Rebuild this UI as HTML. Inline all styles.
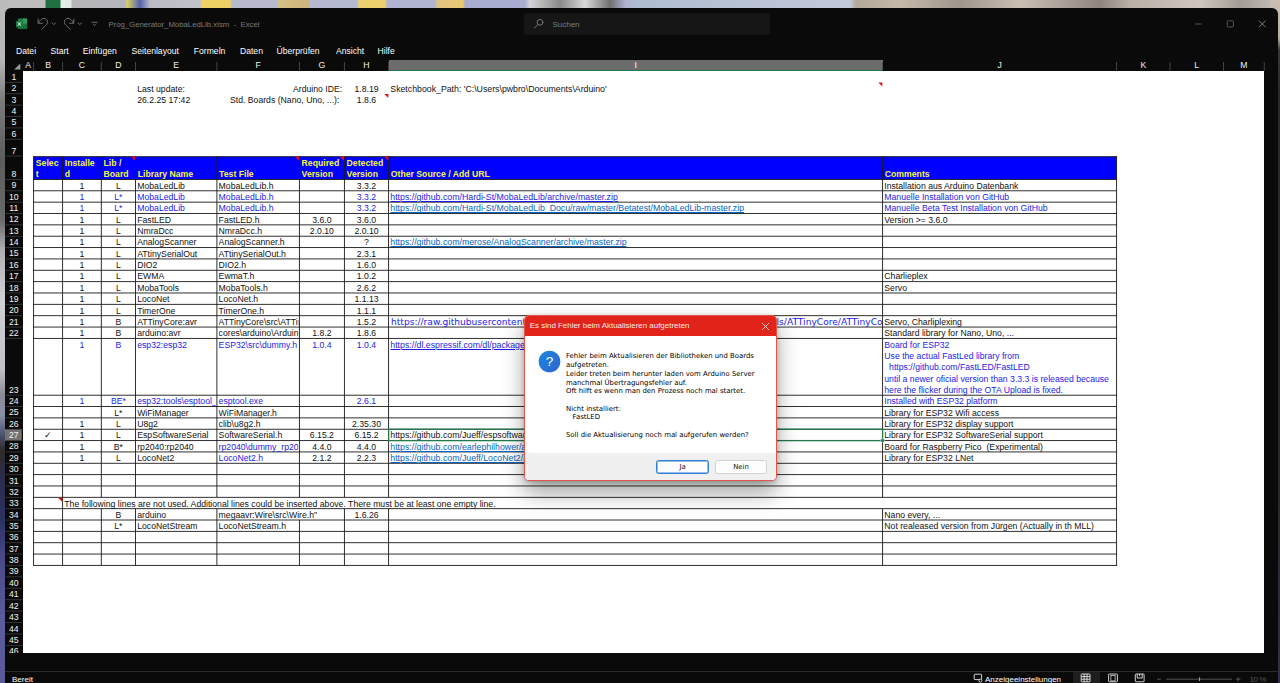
<!DOCTYPE html>
<html lang="de"><head><meta charset="utf-8"><title>Prog_Generator_MobaLedLib.xlsm - Excel</title>
<style>
*{box-sizing:border-box;margin:0;padding:0}
html,body{width:1280px;height:683px;overflow:hidden;background:#26262e}
body{position:relative;font-family:"Liberation Sans",sans-serif;font-size:8.72px;-webkit-font-smoothing:antialiased}
.abs{position:absolute}
#desk-top{position:absolute;left:0;top:0;width:1280px;height:9px;background:linear-gradient(90deg,#bcbcbc 0,#bdbdbd 45px,#1f6f43 46px,#1f6f43 60px,#e8efe9 61px,#dfe9e2 71px,#b6b6ba 72px,#b4b4ba 125px,#d8d060 127px,#5560b0 140px,#bcbcc4 150px,#c2c2cc 200px,#efd064 202px,#efd064 230px,#b9b9cc 232px,#b9b9cc 277px,#d6c084 279px,#cdb67c 308px,#b6b8cf 310px,#b4b8d0 357px,#ecd070 359px,#ecd070 385px,#b0b4d0 387px,#b0b4d0 435px,#dfc285 437px,#e8c870 463px,#a9add0 465px,#a9add0 525px,#d4d4d4 530px,#8a8a8a 560px,#d8d8d8 585px,#707070 610px,#b0b4d0 626px,#b0bcd2 640px,#c2cad9 850px,#b3a999 856px,#c4b9aa 900px,#9f968c 960px,#c9c0b4 1020px,#8e867f 1100px,#b9b0a6 1130px,#cfc7be 1200px,#a39c96 1240px,#c9c2bb 1280px)}
#desk-left{position:absolute;left:0;top:0;width:7px;height:683px;background:linear-gradient(180deg,#bcbcbc 0,#b6b6b6 60px,#7c7c7c 100px,#5c5c5c 160px,#6a6a6a 220px,#b0b0b4 250px,#d0d0d4 300px,#c0c0c8 370px,#8a8a94 395px,#8890a8 415px,#4a5070 435px,#322a2a 450px,#2a2c48 475px,#2c3264 520px,#4a4a88 560px,#5c5c9c 620px,#5a5a98 683px)}
#desk-right{position:absolute;left:1270px;top:0;width:10px;height:683px;background:linear-gradient(180deg,#c9c0b6 0,#b8ada1 38px,#3a3836 50px,#2a2a2c 90px,#29292c 500px,#2d2b3c 600px,#34304a 683px)}
#win{position:absolute;left:5.2px;top:8px;width:1272.8px;height:690px;background:#0a0a0a;border-radius:6px 6px 0 0;overflow:hidden}
#sheet{position:absolute;left:22.5px;top:70.9px;width:1241.7px;height:581.7px;background:#fff}
.t{position:absolute;white-space:nowrap;line-height:11.36px;font-size:8.69px}
.rh{position:absolute;left:5.4px;width:16.9px;color:#f2f2f2;font-size:8.66px;text-align:center;overflow:hidden}
.rh span{position:absolute;left:0;width:16.9px;line-height:11.36px;height:11.36px;display:block}
.ch{position:absolute;top:60.4px;height:10.5px;line-height:11.5px;color:#f2f2f2;text-align:center;font-size:8.66px;overflow:hidden}
.ui{position:absolute;white-space:nowrap;color:#fff}
#dlg{position:absolute;left:523.6px;top:315px;width:253.4px;height:166.4px;border-radius:5px;background:#fff;border:1px solid #e3564a;box-shadow:0 12px 22px 0 rgba(0,0,0,.36),0 1px 4px rgba(0,0,0,.22);overflow:hidden}
#dlg .tb{position:absolute;left:0;top:0;right:0;height:20px;background:#e2231a}
#dlg .tt{position:absolute;left:5.2px;top:0;line-height:20.6px;font-size:7.95px;color:rgba(255,255,255,.93);white-space:nowrap}
#dlg .foot{position:absolute;left:0;right:0;top:137px;bottom:0;background:#f0f0f0}
#dlg .msg{position:absolute;left:41.4px;top:36.4px;font-family:"DejaVu Sans","Liberation Sans",sans-serif;font-size:6.91px;line-height:8.72px;color:#000;white-space:nowrap}
.btn{position:absolute;top:144px;height:14px;border-radius:2.5px;background:#fdfdfd;border:1px solid #d2d2d2;font-family:"DejaVu Sans","Liberation Sans",sans-serif;font-size:6.91px;line-height:12.2px;text-align:center;color:#111}
</style></head><body>
<div id="desk-top"></div><div id="desk-left"></div>
<div id="desk-right"></div>
<div id="win"></div>

<!-- title bar -->
<svg class="abs" style="left:0;top:0" width="1280" height="72" viewBox="0 0 1280 72">
 <!-- excel icon -->
 <rect x="18.1" y="18.5" width="9" height="10.5" rx="0.8" fill="#1c8447"/>
 <rect x="18.1" y="24.4" width="9" height="4.6" fill="#18733e"/>
 <rect x="23" y="18.5" width="4.1" height="5" fill="#2f9c5b"/>
 <rect x="15.9" y="21" width="6.9" height="6.4" rx="0.6" fill="#17783f"/>
 <path d="M17.9 22.3l3 3.4M20.9 22.3l-3 3.4" stroke="#fff" stroke-width="1" fill="none"/>
 <!-- undo / redo -->
 <g fill="none" stroke="#6c6c6c" stroke-width="1" stroke-linecap="round" stroke-linejoin="round">
  <path d="M38.1 19v4.3h4.3"/><path d="M38.5 22.9C40 20 42 18.3 44 18.3c2.4 0 3.6 2.2 3.5 4.3-.2 2-2.4 3.4-5.9 6.6"/>
  <path d="M52 22.9l1.8 1.7 1.8-1.7"/>
  <path d="M73.8 19v4.3h-4.3"/><path d="M73.4 22.9C71.9 20 69.9 18.3 67.9 18.3c-2.4 0-3.6 2.2-3.5 4.3.2 2 2.4 3.4 5.9 6.6"/>
  <path d="M78 22.9l1.8 1.7 1.8-1.7"/>
  <path d="M92.2 22.3h4.8"/><path d="M93.2 24.3l1.4 1.3 1.4-1.3"/>
 </g>
 <!-- search box -->
 <rect x="524" y="13.2" width="246" height="21.6" rx="2.5" fill="#161616"/>
 <g fill="none" stroke="#7d7d7d" stroke-width="0.9" stroke-linecap="round"><circle cx="540" cy="22.3" r="2.9"/><path d="M537.9 24.5l-3.6 3.7"/></g>
 <!-- window controls -->
 <g fill="none" stroke="#5c5c5c" stroke-width="0.9"><path d="M1195.2 24h6.5"/><rect x="1227.2" y="20.8" width="6.2" height="6.2" rx="1"/><path d="M1259 20.6l6.6 6.6M1265.6 20.6l-6.6 6.6" stroke="#8a8a8a"/></g>
 <!-- select-all triangle -->
 <path d="M20.4 63.4v6.2h-6.2z" fill="#9a9a9a"/>
</svg>
<div class="ui" style="left:108.4px;top:19.3px;font-size:7.78px;line-height:11px;color:#7a7a7a">Prog_Generator_MobaLedLib.xlsm &nbsp;- &nbsp;Excel</div>
<div class="ui" style="left:552.4px;top:19.2px;font-size:8px;line-height:11px;color:#7c7c7c">Suchen</div>
<!-- ribbon tabs -->
<div class="ui" style="left:16px;top:45.7px;line-height:11px;font-size:8.6px">Datei</div>
<div class="ui" style="left:50.6px;top:45.7px;line-height:11px;font-size:8.6px">Start</div>
<div class="ui" style="left:82.8px;top:45.7px;line-height:11px;font-size:8.6px">Einfügen</div>
<div class="ui" style="left:131.6px;top:45.7px;line-height:11px;font-size:8.6px">Seitenlayout</div>
<div class="ui" style="left:193.8px;top:45.7px;line-height:11px;font-size:8.6px">Formeln</div>
<div class="ui" style="left:240px;top:45.7px;line-height:11px;font-size:8.6px">Daten</div>
<div class="ui" style="left:276.6px;top:45.7px;line-height:11px;font-size:8.6px">Überprüfen</div>
<div class="ui" style="left:336px;top:45.7px;line-height:11px;font-size:8.6px">Ansicht</div>
<div class="ui" style="left:377.6px;top:45.7px;line-height:11px;font-size:8.6px">Hilfe</div>

<div id="sheet"></div>
<div class="ch" style="left:22.50px;width:11.10px;">A</div>
<div class="ch" style="left:33.60px;width:29.00px;">B</div>
<div class="ch" style="left:62.60px;width:38.70px;">C</div>
<div class="ch" style="left:101.30px;width:34.20px;">D</div>
<div class="ch" style="left:135.50px;width:81.40px;">E</div>
<div class="ch" style="left:216.90px;width:82.50px;">F</div>
<div class="ch" style="left:299.40px;width:45.00px;">G</div>
<div class="ch" style="left:344.40px;width:44.20px;">H</div>
<div class="ch" style="left:388.60px;width:494.00px;background:#6c6c6c;border-bottom:1.3px solid #217a4d;color:#fff;">I</div>
<div class="ch" style="left:882.60px;width:234.00px;">J</div>
<div class="ch" style="left:1116.60px;width:53.40px;">K</div>
<div class="ch" style="left:1170.00px;width:53.50px;">L</div>
<div class="ch" style="left:1223.50px;width:40.70px;">M</div>
<div class="rh" style="top:70.90px;height:11.40px;"><span style="top:0.94px">1</span></div>
<div class="rh" style="top:82.30px;height:11.40px;"><span style="top:0.94px">2</span></div>
<div class="rh" style="top:93.70px;height:11.40px;"><span style="top:0.94px">3</span></div>
<div class="rh" style="top:105.10px;height:11.40px;"><span style="top:0.94px">4</span></div>
<div class="rh" style="top:116.50px;height:11.40px;"><span style="top:0.94px">5</span></div>
<div class="rh" style="top:127.90px;height:11.40px;"><span style="top:0.94px">6</span></div>
<div class="rh" style="top:139.30px;height:16.70px;"><span style="top:6.24px">7</span></div>
<div class="rh" style="top:156.00px;height:23.44px;"><span style="top:12.98px">8</span></div>
<div class="rh" style="top:179.44px;height:11.35px;"><span style="top:0.89px">9</span></div>
<div class="rh" style="top:190.79px;height:11.35px;"><span style="top:0.89px">10</span></div>
<div class="rh" style="top:202.15px;height:11.35px;"><span style="top:0.89px">11</span></div>
<div class="rh" style="top:213.50px;height:11.35px;"><span style="top:0.89px">12</span></div>
<div class="rh" style="top:224.86px;height:11.35px;"><span style="top:0.89px">13</span></div>
<div class="rh" style="top:236.21px;height:11.35px;"><span style="top:0.89px">14</span></div>
<div class="rh" style="top:247.57px;height:11.35px;"><span style="top:0.89px">15</span></div>
<div class="rh" style="top:258.92px;height:11.35px;"><span style="top:0.89px">16</span></div>
<div class="rh" style="top:270.27px;height:11.35px;"><span style="top:0.89px">17</span></div>
<div class="rh" style="top:281.63px;height:11.35px;"><span style="top:0.89px">18</span></div>
<div class="rh" style="top:292.98px;height:11.35px;"><span style="top:0.89px">19</span></div>
<div class="rh" style="top:304.34px;height:11.35px;"><span style="top:0.89px">20</span></div>
<div class="rh" style="top:315.69px;height:11.35px;"><span style="top:0.89px">21</span></div>
<div class="rh" style="top:327.05px;height:11.35px;"><span style="top:0.89px">22</span></div>
<div class="rh" style="top:338.40px;height:56.80px;"><span style="top:46.34px">23</span></div>
<div class="rh" style="top:395.20px;height:11.35px;"><span style="top:0.89px">24</span></div>
<div class="rh" style="top:406.55px;height:11.35px;"><span style="top:0.89px">25</span></div>
<div class="rh" style="top:417.89px;height:11.35px;"><span style="top:0.89px">26</span></div>
<div class="rh" style="top:429.24px;height:11.35px;background:#727272;border-right:1.2px solid #217a4d;"><span style="top:0.89px">27</span></div>
<div class="rh" style="top:440.59px;height:11.35px;"><span style="top:0.89px">28</span></div>
<div class="rh" style="top:451.93px;height:11.35px;"><span style="top:0.89px">29</span></div>
<div class="rh" style="top:463.28px;height:11.35px;"><span style="top:0.89px">30</span></div>
<div class="rh" style="top:474.63px;height:11.35px;"><span style="top:0.89px">31</span></div>
<div class="rh" style="top:485.97px;height:11.35px;"><span style="top:0.89px">32</span></div>
<div class="rh" style="top:497.32px;height:11.35px;"><span style="top:0.89px">33</span></div>
<div class="rh" style="top:508.67px;height:11.35px;"><span style="top:0.89px">34</span></div>
<div class="rh" style="top:520.01px;height:11.35px;"><span style="top:0.89px">35</span></div>
<div class="rh" style="top:531.36px;height:11.35px;"><span style="top:0.89px">36</span></div>
<div class="rh" style="top:542.71px;height:11.35px;"><span style="top:0.89px">37</span></div>
<div class="rh" style="top:554.05px;height:11.35px;"><span style="top:0.89px">38</span></div>
<div class="rh" style="top:565.40px;height:11.43px;"><span style="top:0.97px">39</span></div>
<div class="rh" style="top:576.83px;height:11.43px;"><span style="top:0.97px">40</span></div>
<div class="rh" style="top:588.26px;height:11.43px;"><span style="top:0.97px">41</span></div>
<div class="rh" style="top:599.69px;height:11.43px;"><span style="top:0.97px">42</span></div>
<div class="rh" style="top:611.11px;height:11.43px;"><span style="top:0.97px">43</span></div>
<div class="rh" style="top:622.54px;height:11.43px;"><span style="top:0.97px">44</span></div>
<div class="rh" style="top:633.97px;height:11.43px;"><span style="top:0.97px">45</span></div>
<div class="rh" style="top:645.40px;height:11.40px;"><span style="top:0.94px">46</span></div>
<div class="rh" style="top:656.80px;height:11.36px;"><span style="top:0.90px">47</span></div>
<svg class="abs" style="left:0;top:0" width="1280" height="683" viewBox="0 0 1280 683">
<rect x="33.6" y="156.60" width="1083.00" height="22.84" fill="#0000ff"/>
<rect x="33.15" y="156.25" width="1083.90" height="0.9" fill="#1a1a1a"/>
<rect x="33.15" y="178.99" width="1083.90" height="0.9" fill="#1a1a1a"/>
<rect x="33.15" y="190.34" width="1083.90" height="0.9" fill="#1a1a1a"/>
<rect x="33.15" y="201.70" width="1083.90" height="0.9" fill="#1a1a1a"/>
<rect x="33.15" y="213.05" width="1083.90" height="0.9" fill="#1a1a1a"/>
<rect x="33.15" y="224.41" width="1083.90" height="0.9" fill="#1a1a1a"/>
<rect x="33.15" y="235.76" width="1083.90" height="0.9" fill="#1a1a1a"/>
<rect x="33.15" y="247.12" width="1083.90" height="0.9" fill="#1a1a1a"/>
<rect x="33.15" y="258.47" width="1083.90" height="0.9" fill="#1a1a1a"/>
<rect x="33.15" y="269.82" width="1083.90" height="0.9" fill="#1a1a1a"/>
<rect x="33.15" y="281.18" width="1083.90" height="0.9" fill="#1a1a1a"/>
<rect x="33.15" y="292.53" width="1083.90" height="0.9" fill="#1a1a1a"/>
<rect x="33.15" y="303.89" width="1083.90" height="0.9" fill="#1a1a1a"/>
<rect x="33.15" y="315.24" width="1083.90" height="0.9" fill="#1a1a1a"/>
<rect x="33.15" y="326.60" width="1083.90" height="0.9" fill="#1a1a1a"/>
<rect x="33.15" y="337.95" width="1083.90" height="0.9" fill="#1a1a1a"/>
<rect x="33.15" y="394.75" width="1083.90" height="0.9" fill="#1a1a1a"/>
<rect x="33.15" y="406.10" width="1083.90" height="0.9" fill="#1a1a1a"/>
<rect x="33.15" y="417.44" width="1083.90" height="0.9" fill="#1a1a1a"/>
<rect x="33.15" y="428.79" width="1083.90" height="0.9" fill="#1a1a1a"/>
<rect x="33.15" y="440.14" width="1083.90" height="0.9" fill="#1a1a1a"/>
<rect x="33.15" y="451.48" width="1083.90" height="0.9" fill="#1a1a1a"/>
<rect x="33.15" y="462.83" width="1083.90" height="0.9" fill="#1a1a1a"/>
<rect x="33.15" y="474.18" width="1083.90" height="0.9" fill="#1a1a1a"/>
<rect x="33.15" y="485.52" width="1083.90" height="0.9" fill="#1a1a1a"/>
<rect x="33.15" y="496.87" width="1083.90" height="0.9" fill="#1a1a1a"/>
<rect x="33.15" y="508.22" width="1083.90" height="0.9" fill="#1a1a1a"/>
<rect x="33.15" y="519.56" width="1083.90" height="0.9" fill="#1a1a1a"/>
<rect x="33.15" y="530.91" width="1083.90" height="0.9" fill="#1a1a1a"/>
<rect x="33.15" y="542.26" width="1083.90" height="0.9" fill="#1a1a1a"/>
<rect x="33.15" y="553.60" width="1083.90" height="0.9" fill="#1a1a1a"/>
<rect x="33.15" y="564.95" width="1083.90" height="0.9" fill="#1a1a1a"/>
<rect x="33.15" y="156.50" width="0.9" height="408.90" fill="#1a1a1a"/>
<rect x="62.15" y="156.50" width="0.9" height="408.90" fill="#1a1a1a"/>
<rect x="100.85" y="156.50" width="0.9" height="340.82" fill="#1a1a1a"/>
<rect x="100.85" y="508.67" width="0.9" height="56.73" fill="#1a1a1a"/>
<rect x="135.05" y="156.50" width="0.9" height="340.82" fill="#1a1a1a"/>
<rect x="135.05" y="508.67" width="0.9" height="56.73" fill="#1a1a1a"/>
<rect x="216.45" y="156.50" width="0.9" height="340.82" fill="#1a1a1a"/>
<rect x="216.45" y="508.67" width="0.9" height="56.73" fill="#1a1a1a"/>
<rect x="298.95" y="156.50" width="0.9" height="340.82" fill="#1a1a1a"/>
<rect x="298.95" y="520.01" width="0.9" height="45.39" fill="#1a1a1a"/>
<rect x="343.95" y="156.50" width="0.9" height="340.82" fill="#1a1a1a"/>
<rect x="343.95" y="508.67" width="0.9" height="56.73" fill="#1a1a1a"/>
<rect x="388.15" y="156.50" width="0.9" height="340.82" fill="#1a1a1a"/>
<rect x="388.15" y="508.67" width="0.9" height="56.73" fill="#1a1a1a"/>
<rect x="882.15" y="156.50" width="0.9" height="340.82" fill="#1a1a1a"/>
<rect x="882.15" y="508.67" width="0.9" height="56.73" fill="#1a1a1a"/>
<rect x="1116.15" y="156.50" width="0.9" height="408.90" fill="#1a1a1a"/>
<path d="M131.00 156.60H135.20V160.80Z" fill="#ee0a14"/>
<path d="M294.90 156.60H299.10V160.80Z" fill="#ee0a14"/>
<path d="M339.90 156.60H344.10V160.80Z" fill="#ee0a14"/>
<path d="M384.10 156.60H388.30V160.80Z" fill="#ee0a14"/>
<path d="M58.10 497.72H62.30V501.92Z" fill="#ee0a14"/>
<path d="M384.30 93.90H388.30V97.90Z" fill="#ee0a14"/>
<path d="M878.30 82.50H882.30V86.50Z" fill="#ee0a14"/>
<rect x="388.60" y="429.24" width="494.00" height="11.35" fill="none" stroke="#217a4d" stroke-width="1.3"/>
<rect x="880.90" y="438.89" width="3.3" height="3.3" fill="#217a4d" stroke="#fff" stroke-width="0.5"/>
<rect x="5.5" y="81.85" width="16.8" height="0.9" fill="#383838"/>
<rect x="5.5" y="93.25" width="16.8" height="0.9" fill="#383838"/>
<rect x="5.5" y="104.65" width="16.8" height="0.9" fill="#383838"/>
<rect x="5.5" y="116.05" width="16.8" height="0.9" fill="#383838"/>
<rect x="5.5" y="127.45" width="16.8" height="0.9" fill="#383838"/>
<rect x="5.5" y="138.85" width="16.8" height="0.9" fill="#383838"/>
<rect x="5.5" y="155.55" width="16.8" height="0.9" fill="#383838"/>
<rect x="5.5" y="178.99" width="16.8" height="0.9" fill="#383838"/>
<rect x="5.5" y="190.34" width="16.8" height="0.9" fill="#383838"/>
<rect x="5.5" y="201.70" width="16.8" height="0.9" fill="#383838"/>
<rect x="5.5" y="213.05" width="16.8" height="0.9" fill="#383838"/>
<rect x="5.5" y="224.41" width="16.8" height="0.9" fill="#383838"/>
<rect x="5.5" y="235.76" width="16.8" height="0.9" fill="#383838"/>
<rect x="5.5" y="247.12" width="16.8" height="0.9" fill="#383838"/>
<rect x="5.5" y="258.47" width="16.8" height="0.9" fill="#383838"/>
<rect x="5.5" y="269.82" width="16.8" height="0.9" fill="#383838"/>
<rect x="5.5" y="281.18" width="16.8" height="0.9" fill="#383838"/>
<rect x="5.5" y="292.53" width="16.8" height="0.9" fill="#383838"/>
<rect x="5.5" y="303.89" width="16.8" height="0.9" fill="#383838"/>
<rect x="5.5" y="315.24" width="16.8" height="0.9" fill="#383838"/>
<rect x="5.5" y="326.60" width="16.8" height="0.9" fill="#383838"/>
<rect x="5.5" y="337.95" width="16.8" height="0.9" fill="#383838"/>
<rect x="5.5" y="394.75" width="16.8" height="0.9" fill="#383838"/>
<rect x="5.5" y="406.10" width="16.8" height="0.9" fill="#383838"/>
<rect x="5.5" y="417.44" width="16.8" height="0.9" fill="#383838"/>
<rect x="5.5" y="428.79" width="16.8" height="0.9" fill="#383838"/>
<rect x="5.5" y="440.14" width="16.8" height="0.9" fill="#383838"/>
<rect x="5.5" y="451.48" width="16.8" height="0.9" fill="#383838"/>
<rect x="5.5" y="462.83" width="16.8" height="0.9" fill="#383838"/>
<rect x="5.5" y="474.18" width="16.8" height="0.9" fill="#383838"/>
<rect x="5.5" y="485.52" width="16.8" height="0.9" fill="#383838"/>
<rect x="5.5" y="496.87" width="16.8" height="0.9" fill="#383838"/>
<rect x="5.5" y="508.22" width="16.8" height="0.9" fill="#383838"/>
<rect x="5.5" y="519.56" width="16.8" height="0.9" fill="#383838"/>
<rect x="5.5" y="530.91" width="16.8" height="0.9" fill="#383838"/>
<rect x="5.5" y="542.26" width="16.8" height="0.9" fill="#383838"/>
<rect x="5.5" y="553.60" width="16.8" height="0.9" fill="#383838"/>
<rect x="5.5" y="564.95" width="16.8" height="0.9" fill="#383838"/>
<rect x="5.5" y="576.38" width="16.8" height="0.9" fill="#383838"/>
<rect x="5.5" y="587.81" width="16.8" height="0.9" fill="#383838"/>
<rect x="5.5" y="599.24" width="16.8" height="0.9" fill="#383838"/>
<rect x="5.5" y="610.66" width="16.8" height="0.9" fill="#383838"/>
<rect x="5.5" y="622.09" width="16.8" height="0.9" fill="#383838"/>
<rect x="5.5" y="633.52" width="16.8" height="0.9" fill="#383838"/>
<rect x="5.5" y="644.95" width="16.8" height="0.9" fill="#383838"/>
<rect x="5.5" y="656.35" width="16.8" height="0.9" fill="#383838"/>
<rect x="5.5" y="667.71" width="16.8" height="0.9" fill="#383838"/>
<rect x="33.15" y="62" width="0.9" height="9" fill="#4a4a4a"/>
<rect x="62.15" y="62" width="0.9" height="9" fill="#4a4a4a"/>
<rect x="100.85" y="62" width="0.9" height="9" fill="#4a4a4a"/>
<rect x="135.05" y="62" width="0.9" height="9" fill="#4a4a4a"/>
<rect x="216.45" y="62" width="0.9" height="9" fill="#4a4a4a"/>
<rect x="298.95" y="62" width="0.9" height="9" fill="#4a4a4a"/>
<rect x="343.95" y="62" width="0.9" height="9" fill="#4a4a4a"/>
<rect x="388.15" y="62" width="0.9" height="9" fill="#4a4a4a"/>
<rect x="882.15" y="62" width="0.9" height="9" fill="#4a4a4a"/>
<rect x="1116.15" y="62" width="0.9" height="9" fill="#4a4a4a"/>
<rect x="1169.55" y="62" width="0.9" height="9" fill="#4a4a4a"/>
<rect x="1223.05" y="62" width="0.9" height="9" fill="#4a4a4a"/>
<rect x="1263.75" y="62" width="0.9" height="9" fill="#4a4a4a"/>
</svg>
<div class="t" style="left:137.20px;top:83.50px;width:78.70px;height:11.36px;text-align:left;color:#111;">Last update:</div>
<div class="t" style="left:137.20px;top:94.90px;width:78.70px;height:11.36px;text-align:left;color:#111;">26.2.25 17:42</div>
<div class="t" style="left:200.00px;top:83.50px;width:142.20px;height:11.36px;text-align:right;color:#111;">Arduino IDE:</div>
<div class="t" style="left:200.00px;top:94.90px;width:139.40px;height:11.36px;text-align:right;color:#111;">Std. Boards (Nano, Uno, ...):</div>
<div class="t" style="left:344.40px;top:83.50px;width:44.20px;height:11.36px;text-align:center;color:#111;clip-path:inset(-6px 0 -6px 0);">1.8.19</div>
<div class="t" style="left:344.40px;top:94.90px;width:44.20px;height:11.36px;text-align:center;color:#111;clip-path:inset(-6px 0 -6px 0);">1.8.6</div>
<div class="t" style="left:390.30px;top:83.50px;width:491.30px;height:11.36px;text-align:left;color:#111;clip-path:inset(-6px 0 -6px 0);font-size:8.76px;">Sketchbook_Path: 'C:\Users\pwbro\Documents\Arduino'</div>
<div class="t" style="left:35.80px;top:157.50px;width:26.40px;height:23.00px;text-align:left;color:#f6f640;clip-path:inset(-6px 0 -6px 0);font-weight:bold;line-height:11.2px;">Selec<br>t</div>
<div class="t" style="left:64.80px;top:157.50px;width:36.10px;height:23.00px;text-align:left;color:#f6f640;clip-path:inset(-6px 0 -6px 0);font-weight:bold;line-height:11.2px;">Installe<br>d</div>
<div class="t" style="left:103.50px;top:157.50px;width:31.60px;height:23.00px;text-align:left;color:#f6f640;clip-path:inset(-6px 0 -6px 0);font-weight:bold;line-height:11.2px;">Lib /<br>Board</div>
<div class="t" style="left:137.70px;top:157.50px;width:78.80px;height:23.00px;text-align:left;color:#f6f640;clip-path:inset(-6px 0 -6px 0);font-weight:bold;line-height:11.2px;">&nbsp;<br>Library Name</div>
<div class="t" style="left:219.10px;top:157.50px;width:79.90px;height:23.00px;text-align:left;color:#f6f640;clip-path:inset(-6px 0 -6px 0);font-weight:bold;line-height:11.2px;">&nbsp;<br>Test File</div>
<div class="t" style="left:301.60px;top:157.50px;width:42.40px;height:23.00px;text-align:left;color:#f6f640;clip-path:inset(-6px 0 -6px 0);font-weight:bold;line-height:11.2px;">Required<br>Version</div>
<div class="t" style="left:346.60px;top:157.50px;width:41.60px;height:23.00px;text-align:left;color:#f6f640;clip-path:inset(-6px 0 -6px 0);font-weight:bold;line-height:11.2px;">Detected<br>Version</div>
<div class="t" style="left:390.80px;top:157.50px;width:491.40px;height:23.00px;text-align:left;color:#f6f640;clip-path:inset(-6px 0 -6px 0);font-weight:bold;line-height:11.2px;">&nbsp;<br>Other Source / Add URL</div>
<div class="t" style="left:884.80px;top:157.50px;width:231.40px;height:23.00px;text-align:left;color:#f6f640;clip-path:inset(-6px 0 -6px 0);font-weight:bold;line-height:11.2px;">&nbsp;<br>Comments</div>
<div class="t" style="left:62.60px;top:180.64px;width:38.70px;height:11.36px;text-align:center;color:#111;clip-path:inset(-6px 0 -6px 0);">1</div>
<div class="t" style="left:101.30px;top:180.64px;width:34.20px;height:11.36px;text-align:center;color:#111;clip-path:inset(-6px 0 -6px 0);">L</div>
<div class="t" style="left:137.20px;top:180.64px;width:78.70px;height:11.36px;text-align:left;color:#111;clip-path:inset(-6px 0 -6px 0);">MobaLedLib</div>
<div class="t" style="left:218.60px;top:180.64px;width:79.80px;height:11.36px;text-align:left;color:#111;clip-path:inset(-6px 0 -6px 0);">MobaLedLib.h</div>
<div class="t" style="left:344.40px;top:180.64px;width:44.20px;height:11.36px;text-align:center;color:#111;clip-path:inset(-6px 0 -6px 0);">3.3.2</div>
<div class="t" style="left:884.30px;top:180.64px;width:231.30px;height:11.36px;text-align:left;color:#111;clip-path:inset(-6px 0 -6px 0);">Installation aus Arduino Datenbank</div>
<div class="t" style="left:62.60px;top:191.99px;width:38.70px;height:11.36px;text-align:center;color:#1c1ce6;clip-path:inset(-6px 0 -6px 0);">1</div>
<div class="t" style="left:101.30px;top:191.99px;width:34.20px;height:11.36px;text-align:center;color:#1c1ce6;clip-path:inset(-6px 0 -6px 0);">L*</div>
<div class="t" style="left:137.20px;top:191.99px;width:78.70px;height:11.36px;text-align:left;color:#1c1ce6;clip-path:inset(-6px 0 -6px 0);">MobaLedLib</div>
<div class="t" style="left:218.60px;top:191.99px;width:79.80px;height:11.36px;text-align:left;color:#1c1ce6;clip-path:inset(-6px 0 -6px 0);">MobaLedLib.h</div>
<div class="t" style="left:344.40px;top:191.99px;width:44.20px;height:11.36px;text-align:center;color:#1c1ce6;clip-path:inset(-6px 0 -6px 0);">3.3.2</div>
<div class="t" style="left:390.30px;top:191.99px;width:491.30px;height:11.36px;text-align:left;color:#1c1ce6;clip-path:inset(-6px 0 -6px 0);text-decoration:underline;text-decoration-thickness:0.7px;text-underline-offset:0.8px;font-size:8.78px;">https://github.com/Hardi-St/MobaLedLib/archive/master.zip</div>
<div class="t" style="left:884.30px;top:191.99px;width:231.30px;height:11.36px;text-align:left;color:#1c1ce6;clip-path:inset(-6px 0 -6px 0);">Manuelle Installation von GitHub</div>
<div class="t" style="left:62.60px;top:203.35px;width:38.70px;height:11.36px;text-align:center;color:#1c1ce6;clip-path:inset(-6px 0 -6px 0);">1</div>
<div class="t" style="left:101.30px;top:203.35px;width:34.20px;height:11.36px;text-align:center;color:#1c1ce6;clip-path:inset(-6px 0 -6px 0);">L*</div>
<div class="t" style="left:137.20px;top:203.35px;width:78.70px;height:11.36px;text-align:left;color:#1c1ce6;clip-path:inset(-6px 0 -6px 0);">MobaLedLib</div>
<div class="t" style="left:218.60px;top:203.35px;width:79.80px;height:11.36px;text-align:left;color:#1c1ce6;clip-path:inset(-6px 0 -6px 0);">MobaLedLib.h</div>
<div class="t" style="left:344.40px;top:203.35px;width:44.20px;height:11.36px;text-align:center;color:#1c1ce6;clip-path:inset(-6px 0 -6px 0);">3.3.2</div>
<div class="t" style="left:390.30px;top:203.35px;width:491.30px;height:11.36px;text-align:left;color:#0563c1;clip-path:inset(-6px 0 -6px 0);text-decoration:underline;text-decoration-thickness:0.7px;text-underline-offset:0.8px;font-size:8.78px;">https://github.com/Hardi-St/MobaLedLib_Docu/raw/master/Betatest/MobaLedLib-master.zip</div>
<div class="t" style="left:884.30px;top:203.35px;width:231.30px;height:11.36px;text-align:left;color:#1c1ce6;clip-path:inset(-6px 0 -6px 0);">Manuelle Beta Test Installation von GitHub</div>
<div class="t" style="left:62.60px;top:214.70px;width:38.70px;height:11.36px;text-align:center;color:#111;clip-path:inset(-6px 0 -6px 0);">1</div>
<div class="t" style="left:101.30px;top:214.70px;width:34.20px;height:11.36px;text-align:center;color:#111;clip-path:inset(-6px 0 -6px 0);">L</div>
<div class="t" style="left:137.20px;top:214.70px;width:78.70px;height:11.36px;text-align:left;color:#111;clip-path:inset(-6px 0 -6px 0);">FastLED</div>
<div class="t" style="left:218.60px;top:214.70px;width:79.80px;height:11.36px;text-align:left;color:#111;clip-path:inset(-6px 0 -6px 0);">FastLED.h</div>
<div class="t" style="left:299.40px;top:214.70px;width:45.00px;height:11.36px;text-align:center;color:#111;clip-path:inset(-6px 0 -6px 0);">3.6.0</div>
<div class="t" style="left:344.40px;top:214.70px;width:44.20px;height:11.36px;text-align:center;color:#111;clip-path:inset(-6px 0 -6px 0);">3.6.0</div>
<div class="t" style="left:884.30px;top:214.70px;width:231.30px;height:11.36px;text-align:left;color:#111;clip-path:inset(-6px 0 -6px 0);">Version &gt;= 3.6.0</div>
<div class="t" style="left:62.60px;top:226.06px;width:38.70px;height:11.36px;text-align:center;color:#111;clip-path:inset(-6px 0 -6px 0);">1</div>
<div class="t" style="left:101.30px;top:226.06px;width:34.20px;height:11.36px;text-align:center;color:#111;clip-path:inset(-6px 0 -6px 0);">L</div>
<div class="t" style="left:137.20px;top:226.06px;width:78.70px;height:11.36px;text-align:left;color:#111;clip-path:inset(-6px 0 -6px 0);">NmraDcc</div>
<div class="t" style="left:218.60px;top:226.06px;width:79.80px;height:11.36px;text-align:left;color:#111;clip-path:inset(-6px 0 -6px 0);">NmraDcc.h</div>
<div class="t" style="left:299.40px;top:226.06px;width:45.00px;height:11.36px;text-align:center;color:#111;clip-path:inset(-6px 0 -6px 0);">2.0.10</div>
<div class="t" style="left:344.40px;top:226.06px;width:44.20px;height:11.36px;text-align:center;color:#111;clip-path:inset(-6px 0 -6px 0);">2.0.10</div>
<div class="t" style="left:62.60px;top:237.41px;width:38.70px;height:11.36px;text-align:center;color:#111;clip-path:inset(-6px 0 -6px 0);">1</div>
<div class="t" style="left:101.30px;top:237.41px;width:34.20px;height:11.36px;text-align:center;color:#111;clip-path:inset(-6px 0 -6px 0);">L</div>
<div class="t" style="left:137.20px;top:237.41px;width:78.70px;height:11.36px;text-align:left;color:#111;clip-path:inset(-6px 0 -6px 0);">AnalogScanner</div>
<div class="t" style="left:218.60px;top:237.41px;width:79.80px;height:11.36px;text-align:left;color:#111;clip-path:inset(-6px 0 -6px 0);">AnalogScanner.h</div>
<div class="t" style="left:344.40px;top:237.41px;width:44.20px;height:11.36px;text-align:center;color:#111;clip-path:inset(-6px 0 -6px 0);">?</div>
<div class="t" style="left:390.30px;top:237.41px;width:491.30px;height:11.36px;text-align:left;color:#0563c1;clip-path:inset(-6px 0 -6px 0);text-decoration:underline;text-decoration-thickness:0.7px;text-underline-offset:0.8px;font-size:8.78px;">https://github.com/merose/AnalogScanner/archive/master.zip</div>
<div class="t" style="left:62.60px;top:248.77px;width:38.70px;height:11.36px;text-align:center;color:#111;clip-path:inset(-6px 0 -6px 0);">1</div>
<div class="t" style="left:101.30px;top:248.77px;width:34.20px;height:11.36px;text-align:center;color:#111;clip-path:inset(-6px 0 -6px 0);">L</div>
<div class="t" style="left:137.20px;top:248.77px;width:78.70px;height:11.36px;text-align:left;color:#111;clip-path:inset(-6px 0 -6px 0);">ATtinySerialOut</div>
<div class="t" style="left:218.60px;top:248.77px;width:79.80px;height:11.36px;text-align:left;color:#111;clip-path:inset(-6px 0 -6px 0);">ATtinySerialOut.h</div>
<div class="t" style="left:344.40px;top:248.77px;width:44.20px;height:11.36px;text-align:center;color:#111;clip-path:inset(-6px 0 -6px 0);">2.3.1</div>
<div class="t" style="left:62.60px;top:260.12px;width:38.70px;height:11.36px;text-align:center;color:#111;clip-path:inset(-6px 0 -6px 0);">1</div>
<div class="t" style="left:101.30px;top:260.12px;width:34.20px;height:11.36px;text-align:center;color:#111;clip-path:inset(-6px 0 -6px 0);">L</div>
<div class="t" style="left:137.20px;top:260.12px;width:78.70px;height:11.36px;text-align:left;color:#111;clip-path:inset(-6px 0 -6px 0);">DIO2</div>
<div class="t" style="left:218.60px;top:260.12px;width:79.80px;height:11.36px;text-align:left;color:#111;clip-path:inset(-6px 0 -6px 0);">DIO2.h</div>
<div class="t" style="left:344.40px;top:260.12px;width:44.20px;height:11.36px;text-align:center;color:#111;clip-path:inset(-6px 0 -6px 0);">1.6.0</div>
<div class="t" style="left:62.60px;top:271.47px;width:38.70px;height:11.36px;text-align:center;color:#111;clip-path:inset(-6px 0 -6px 0);">1</div>
<div class="t" style="left:101.30px;top:271.47px;width:34.20px;height:11.36px;text-align:center;color:#111;clip-path:inset(-6px 0 -6px 0);">L</div>
<div class="t" style="left:137.20px;top:271.47px;width:78.70px;height:11.36px;text-align:left;color:#111;clip-path:inset(-6px 0 -6px 0);">EWMA</div>
<div class="t" style="left:218.60px;top:271.47px;width:79.80px;height:11.36px;text-align:left;color:#111;clip-path:inset(-6px 0 -6px 0);">EwmaT.h</div>
<div class="t" style="left:344.40px;top:271.47px;width:44.20px;height:11.36px;text-align:center;color:#111;clip-path:inset(-6px 0 -6px 0);">1.0.2</div>
<div class="t" style="left:884.30px;top:271.47px;width:231.30px;height:11.36px;text-align:left;color:#111;clip-path:inset(-6px 0 -6px 0);">Charlieplex</div>
<div class="t" style="left:62.60px;top:282.83px;width:38.70px;height:11.36px;text-align:center;color:#111;clip-path:inset(-6px 0 -6px 0);">1</div>
<div class="t" style="left:101.30px;top:282.83px;width:34.20px;height:11.36px;text-align:center;color:#111;clip-path:inset(-6px 0 -6px 0);">L</div>
<div class="t" style="left:137.20px;top:282.83px;width:78.70px;height:11.36px;text-align:left;color:#111;clip-path:inset(-6px 0 -6px 0);">MobaTools</div>
<div class="t" style="left:218.60px;top:282.83px;width:79.80px;height:11.36px;text-align:left;color:#111;clip-path:inset(-6px 0 -6px 0);">MobaTools.h</div>
<div class="t" style="left:344.40px;top:282.83px;width:44.20px;height:11.36px;text-align:center;color:#111;clip-path:inset(-6px 0 -6px 0);">2.6.2</div>
<div class="t" style="left:884.30px;top:282.83px;width:231.30px;height:11.36px;text-align:left;color:#111;clip-path:inset(-6px 0 -6px 0);">Servo</div>
<div class="t" style="left:62.60px;top:294.18px;width:38.70px;height:11.36px;text-align:center;color:#111;clip-path:inset(-6px 0 -6px 0);">1</div>
<div class="t" style="left:101.30px;top:294.18px;width:34.20px;height:11.36px;text-align:center;color:#111;clip-path:inset(-6px 0 -6px 0);">L</div>
<div class="t" style="left:137.20px;top:294.18px;width:78.70px;height:11.36px;text-align:left;color:#111;clip-path:inset(-6px 0 -6px 0);">LocoNet</div>
<div class="t" style="left:218.60px;top:294.18px;width:79.80px;height:11.36px;text-align:left;color:#111;clip-path:inset(-6px 0 -6px 0);">LocoNet.h</div>
<div class="t" style="left:344.40px;top:294.18px;width:44.20px;height:11.36px;text-align:center;color:#111;clip-path:inset(-6px 0 -6px 0);">1.1.13</div>
<div class="t" style="left:62.60px;top:305.54px;width:38.70px;height:11.36px;text-align:center;color:#111;clip-path:inset(-6px 0 -6px 0);">1</div>
<div class="t" style="left:101.30px;top:305.54px;width:34.20px;height:11.36px;text-align:center;color:#111;clip-path:inset(-6px 0 -6px 0);">L</div>
<div class="t" style="left:137.20px;top:305.54px;width:78.70px;height:11.36px;text-align:left;color:#111;clip-path:inset(-6px 0 -6px 0);">TimerOne</div>
<div class="t" style="left:218.60px;top:305.54px;width:79.80px;height:11.36px;text-align:left;color:#111;clip-path:inset(-6px 0 -6px 0);">TimerOne.h</div>
<div class="t" style="left:344.40px;top:305.54px;width:44.20px;height:11.36px;text-align:center;color:#111;clip-path:inset(-6px 0 -6px 0);">1.1.1</div>
<div class="t" style="left:62.60px;top:316.89px;width:38.70px;height:11.36px;text-align:center;color:#111;clip-path:inset(-6px 0 -6px 0);">1</div>
<div class="t" style="left:101.30px;top:316.89px;width:34.20px;height:11.36px;text-align:center;color:#111;clip-path:inset(-6px 0 -6px 0);">B</div>
<div class="t" style="left:137.20px;top:316.89px;width:78.70px;height:11.36px;text-align:left;color:#111;clip-path:inset(-6px 0 -6px 0);">ATTinyCore:avr</div>
<div class="t" style="left:218.60px;top:316.89px;width:79.80px;height:11.36px;text-align:left;color:#111;clip-path:inset(-6px 0 -6px 0);">ATTinyCore\src\ATTinyCore.h</div>
<div class="t" style="left:344.40px;top:316.89px;width:44.20px;height:11.36px;text-align:center;color:#111;clip-path:inset(-6px 0 -6px 0);">1.5.2</div>
<div class="t" style="left:884.30px;top:316.89px;width:231.30px;height:11.36px;text-align:left;color:#111;clip-path:inset(-6px 0 -6px 0);">Servo, Charliplexing</div>
<div class="t" style="left:62.60px;top:328.25px;width:38.70px;height:11.36px;text-align:center;color:#111;clip-path:inset(-6px 0 -6px 0);">1</div>
<div class="t" style="left:101.30px;top:328.25px;width:34.20px;height:11.36px;text-align:center;color:#111;clip-path:inset(-6px 0 -6px 0);">B</div>
<div class="t" style="left:137.20px;top:328.25px;width:78.70px;height:11.36px;text-align:left;color:#111;clip-path:inset(-6px 0 -6px 0);">arduino:avr</div>
<div class="t" style="left:218.60px;top:328.25px;width:79.80px;height:11.36px;text-align:left;color:#111;clip-path:inset(-6px 0 -6px 0);">cores\arduino\Arduino.h</div>
<div class="t" style="left:299.40px;top:328.25px;width:45.00px;height:11.36px;text-align:center;color:#111;clip-path:inset(-6px 0 -6px 0);">1.8.2</div>
<div class="t" style="left:344.40px;top:328.25px;width:44.20px;height:11.36px;text-align:center;color:#111;clip-path:inset(-6px 0 -6px 0);">1.8.6</div>
<div class="t" style="left:884.30px;top:328.25px;width:231.30px;height:11.36px;text-align:left;color:#111;clip-path:inset(-6px 0 -6px 0);">Standard library for Nano, Uno, ...</div>
<div class="t" style="left:62.60px;top:339.60px;width:38.70px;height:11.36px;text-align:center;color:#1c1ce6;clip-path:inset(-6px 0 -6px 0);">1</div>
<div class="t" style="left:101.30px;top:339.60px;width:34.20px;height:11.36px;text-align:center;color:#1c1ce6;clip-path:inset(-6px 0 -6px 0);">B</div>
<div class="t" style="left:137.20px;top:339.60px;width:78.70px;height:11.36px;text-align:left;color:#1c1ce6;clip-path:inset(-6px 0 -6px 0);">esp32:esp32</div>
<div class="t" style="left:218.60px;top:339.60px;width:79.80px;height:11.36px;text-align:left;color:#1c1ce6;clip-path:inset(-6px 0 -6px 0);">ESP32\src\dummy.h</div>
<div class="t" style="left:299.40px;top:339.60px;width:45.00px;height:11.36px;text-align:center;color:#1c1ce6;clip-path:inset(-6px 0 -6px 0);">1.0.4</div>
<div class="t" style="left:344.40px;top:339.60px;width:44.20px;height:11.36px;text-align:center;color:#1c1ce6;clip-path:inset(-6px 0 -6px 0);">1.0.4</div>
<div class="t" style="left:390.30px;top:339.60px;width:491.30px;height:11.36px;text-align:left;color:#1c1ce6;clip-path:inset(-6px 0 -6px 0);text-decoration:underline;text-decoration-thickness:0.7px;text-underline-offset:0.8px;font-size:8.78px;">https://dl.espressif.com/dl/package_esp32_index.json</div>
<div class="t" style="left:62.60px;top:396.40px;width:38.70px;height:11.36px;text-align:center;color:#1c1ce6;clip-path:inset(-6px 0 -6px 0);">1</div>
<div class="t" style="left:101.30px;top:396.40px;width:34.20px;height:11.36px;text-align:center;color:#1c1ce6;clip-path:inset(-6px 0 -6px 0);">BE*</div>
<div class="t" style="left:137.20px;top:396.40px;width:78.70px;height:11.36px;text-align:left;color:#1c1ce6;clip-path:inset(-6px 0 -6px 0);">esp32:tools\esptool_py</div>
<div class="t" style="left:218.60px;top:396.40px;width:79.80px;height:11.36px;text-align:left;color:#1c1ce6;clip-path:inset(-6px 0 -6px 0);">esptool.exe</div>
<div class="t" style="left:344.40px;top:396.40px;width:44.20px;height:11.36px;text-align:center;color:#1c1ce6;clip-path:inset(-6px 0 -6px 0);">2.6.1</div>
<div class="t" style="left:884.30px;top:396.40px;width:231.30px;height:11.36px;text-align:left;color:#1c1ce6;clip-path:inset(-6px 0 -6px 0);">Installed with ESP32 platform</div>
<div class="t" style="left:101.30px;top:407.75px;width:34.20px;height:11.36px;text-align:center;color:#111;clip-path:inset(-6px 0 -6px 0);">L*</div>
<div class="t" style="left:137.20px;top:407.75px;width:78.70px;height:11.36px;text-align:left;color:#111;clip-path:inset(-6px 0 -6px 0);">WiFiManager</div>
<div class="t" style="left:218.60px;top:407.75px;width:79.80px;height:11.36px;text-align:left;color:#111;clip-path:inset(-6px 0 -6px 0);">WiFiManager.h</div>
<div class="t" style="left:884.30px;top:407.75px;width:231.30px;height:11.36px;text-align:left;color:#111;clip-path:inset(-6px 0 -6px 0);">Library for ESP32 Wifi access</div>
<div class="t" style="left:62.60px;top:419.09px;width:38.70px;height:11.36px;text-align:center;color:#111;clip-path:inset(-6px 0 -6px 0);">1</div>
<div class="t" style="left:101.30px;top:419.09px;width:34.20px;height:11.36px;text-align:center;color:#111;clip-path:inset(-6px 0 -6px 0);">L</div>
<div class="t" style="left:137.20px;top:419.09px;width:78.70px;height:11.36px;text-align:left;color:#111;clip-path:inset(-6px 0 -6px 0);">U8g2</div>
<div class="t" style="left:218.60px;top:419.09px;width:79.80px;height:11.36px;text-align:left;color:#111;clip-path:inset(-6px 0 -6px 0);">clib\u8g2.h</div>
<div class="t" style="left:344.40px;top:419.09px;width:44.20px;height:11.36px;text-align:center;color:#111;clip-path:inset(-6px 0 -6px 0);">2.35.30</div>
<div class="t" style="left:884.30px;top:419.09px;width:231.30px;height:11.36px;text-align:left;color:#111;clip-path:inset(-6px 0 -6px 0);">Library for ESP32 display support</div>
<div class="t" style="left:33.60px;top:430.44px;width:29.00px;height:11.36px;text-align:center;color:#111;clip-path:inset(-6px 0 -6px 0);">✓</div>
<div class="t" style="left:62.60px;top:430.44px;width:38.70px;height:11.36px;text-align:center;color:#111;clip-path:inset(-6px 0 -6px 0);">1</div>
<div class="t" style="left:101.30px;top:430.44px;width:34.20px;height:11.36px;text-align:center;color:#111;clip-path:inset(-6px 0 -6px 0);">L</div>
<div class="t" style="left:137.20px;top:430.44px;width:78.70px;height:11.36px;text-align:left;color:#111;clip-path:inset(-6px 0 -6px 0);">EspSoftwareSerial</div>
<div class="t" style="left:218.60px;top:430.44px;width:79.80px;height:11.36px;text-align:left;color:#111;clip-path:inset(-6px 0 -6px 0);">SoftwareSerial.h</div>
<div class="t" style="left:299.40px;top:430.44px;width:45.00px;height:11.36px;text-align:center;color:#111;clip-path:inset(-6px 0 -6px 0);">6.15.2</div>
<div class="t" style="left:344.40px;top:430.44px;width:44.20px;height:11.36px;text-align:center;color:#111;clip-path:inset(-6px 0 -6px 0);">6.15.2</div>
<div class="t" style="left:390.30px;top:430.44px;width:491.30px;height:11.36px;text-align:left;color:#111;clip-path:inset(-6px 0 -6px 0);font-size:8.78px;">https://github.com/Jueff/espsoftwareserial/archive/refs/heads/main.zip</div>
<div class="t" style="left:884.30px;top:430.44px;width:231.30px;height:11.36px;text-align:left;color:#111;clip-path:inset(-6px 0 -6px 0);">Library for ESP32 SoftwareSerial support</div>
<div class="t" style="left:62.60px;top:441.79px;width:38.70px;height:11.36px;text-align:center;color:#111;clip-path:inset(-6px 0 -6px 0);">1</div>
<div class="t" style="left:101.30px;top:441.79px;width:34.20px;height:11.36px;text-align:center;color:#111;clip-path:inset(-6px 0 -6px 0);">B*</div>
<div class="t" style="left:137.20px;top:441.79px;width:78.70px;height:11.36px;text-align:left;color:#111;clip-path:inset(-6px 0 -6px 0);">rp2040:rp2040</div>
<div class="t" style="left:218.60px;top:441.79px;width:79.80px;height:11.36px;text-align:left;color:#1c1ce6;clip-path:inset(-6px 0 -6px 0);">rp2040\dummy_rp2040.h</div>
<div class="t" style="left:299.40px;top:441.79px;width:45.00px;height:11.36px;text-align:center;color:#111;clip-path:inset(-6px 0 -6px 0);">4.4.0</div>
<div class="t" style="left:344.40px;top:441.79px;width:44.20px;height:11.36px;text-align:center;color:#111;clip-path:inset(-6px 0 -6px 0);">4.4.0</div>
<div class="t" style="left:390.30px;top:441.79px;width:491.30px;height:11.36px;text-align:left;color:#0563c1;clip-path:inset(-6px 0 -6px 0);text-decoration:underline;text-decoration-thickness:0.7px;text-underline-offset:0.8px;font-size:8.78px;">https://github.com/earlephilhower/arduino-pico/releases/download/global/package_rp2040.json</div>
<div class="t" style="left:884.30px;top:441.79px;width:231.30px;height:11.36px;text-align:left;color:#111;clip-path:inset(-6px 0 -6px 0);">Board for Raspberry Pico  (Experimental)</div>
<div class="t" style="left:62.60px;top:453.13px;width:38.70px;height:11.36px;text-align:center;color:#111;clip-path:inset(-6px 0 -6px 0);">1</div>
<div class="t" style="left:101.30px;top:453.13px;width:34.20px;height:11.36px;text-align:center;color:#111;clip-path:inset(-6px 0 -6px 0);">L</div>
<div class="t" style="left:137.20px;top:453.13px;width:78.70px;height:11.36px;text-align:left;color:#111;clip-path:inset(-6px 0 -6px 0);">LocoNet2</div>
<div class="t" style="left:218.60px;top:453.13px;width:79.80px;height:11.36px;text-align:left;color:#1c1ce6;clip-path:inset(-6px 0 -6px 0);">LocoNet2.h</div>
<div class="t" style="left:299.40px;top:453.13px;width:45.00px;height:11.36px;text-align:center;color:#111;clip-path:inset(-6px 0 -6px 0);">2.1.2</div>
<div class="t" style="left:344.40px;top:453.13px;width:44.20px;height:11.36px;text-align:center;color:#111;clip-path:inset(-6px 0 -6px 0);">2.2.3</div>
<div class="t" style="left:390.30px;top:453.13px;width:491.30px;height:11.36px;text-align:left;color:#0563c1;clip-path:inset(-6px 0 -6px 0);text-decoration:underline;text-decoration-thickness:0.7px;text-underline-offset:0.8px;font-size:8.78px;">https://github.com/Jueff/LocoNet2/archive/refs/heads/master.zip</div>
<div class="t" style="left:884.30px;top:453.13px;width:231.30px;height:11.36px;text-align:left;color:#111;clip-path:inset(-6px 0 -6px 0);">Library for ESP32 LNet</div>
<div class="t" style="left:101.30px;top:509.87px;width:34.20px;height:11.36px;text-align:center;color:#111;clip-path:inset(-6px 0 -6px 0);">B</div>
<div class="t" style="left:137.20px;top:509.87px;width:78.70px;height:11.36px;text-align:left;color:#111;clip-path:inset(-6px 0 -6px 0);">arduino</div>
<div class="t" style="left:218.60px;top:509.87px;width:79.80px;height:11.36px;text-align:left;color:#111;">megaavr:Wire\src\Wire.h"</div>
<div class="t" style="left:344.40px;top:509.87px;width:44.20px;height:11.36px;text-align:center;color:#111;clip-path:inset(-6px 0 -6px 0);">1.6.26</div>
<div class="t" style="left:884.30px;top:509.87px;width:231.30px;height:11.36px;text-align:left;color:#111;clip-path:inset(-6px 0 -6px 0);">Nano every, ...</div>
<div class="t" style="left:101.30px;top:521.21px;width:34.20px;height:11.36px;text-align:center;color:#111;clip-path:inset(-6px 0 -6px 0);">L*</div>
<div class="t" style="left:137.20px;top:521.21px;width:78.70px;height:11.36px;text-align:left;color:#111;clip-path:inset(-6px 0 -6px 0);">LocoNetStream</div>
<div class="t" style="left:218.60px;top:521.21px;width:79.80px;height:11.36px;text-align:left;color:#111;clip-path:inset(-6px 0 -6px 0);">LocoNetStream.h</div>
<div class="t" style="left:884.30px;top:521.21px;width:231.30px;height:11.36px;text-align:left;color:#111;clip-path:inset(-6px 0 -6px 0);">Not realeased version from Jürgen (Actually in th MLL)</div>
<div class="t" style="left:391.00px;top:316.69px;width:491.00px;height:11.36px;text-align:left;color:#1c1ce6;clip-path:inset(-6px 0 -6px 0);font-family:'DejaVu Sans',sans-serif;font-size:9.1px;"><span style="position:absolute;left:0;top:0;width:385.10px;overflow:hidden">https://raw.githubusercontent.com/Hardi-St/MobaLedLib_Docu/master/Too</span><span style="position:absolute;left:385.60px;top:0">ls/ATTinyCore/ATTinyCore.zip</span></div>
<div class="t" style="left:884.30px;top:339.70px;width:231.90px;height:56.80px;text-align:left;color:#1c1ce6;clip-path:inset(-6px 0 -6px 0);line-height:11.3px;">Board for ESP32<br>Use the actual FastLed library from<br>  https://github.com/FastLED/FastLED<br>until a newer oficial version than 3.3.3 is released because<br>here the flicker during the OTA Upload is fixed.</div>
<div class="t" style="left:64.30px;top:498.52px;width:1051.00px;height:11.36px;text-align:left;color:#111;">The following lines are not used. Additional lines could be inserted above. There must be at least one empty line.</div>

<!-- bottom area -->
<div class="abs" style="left:5.2px;top:652.6px;width:1272.8px;height:31px;background:#0a0a0a"></div>
<div class="abs" style="left:5.2px;top:671px;width:1272.8px;height:1px;background:#2c2c2c"></div>
<div class="abs" style="left:1073px;top:672px;width:26.5px;height:11px;background:#1e1e1e"></div>
<div class="ui" style="left:12px;top:673.6px;font-size:8px;line-height:11px">Bereit</div>
<div class="ui" style="left:985px;top:673.6px;font-size:8px;line-height:11px">Anzeigeeinstellungen</div>
<div class="ui" style="left:1249.6px;top:673.6px;font-size:8px;line-height:11px;color:#555;letter-spacing:-0.45px">10 %</div>
<svg class="abs" style="left:960px;top:668px" width="320" height="15" viewBox="960 668 320 15">
 <g fill="none" stroke="#e6e6e6" stroke-width="0.9">
  <rect x="974.2" y="674.2" width="7.4" height="5.4" rx="0.8"/><circle cx="980.4" cy="680.6" r="1.5" fill="#0a0a0a"/>
  <rect x="1081.2" y="674" width="8.8" height="7.8" rx="0.6"/><path d="M1081.2 676.6h8.8M1081.2 679.2h8.8M1084.1 674v7.8M1087 674v7.8"/>
  <rect x="1108.6" y="674" width="8.8" height="7.8" rx="0.8"/><rect x="1110.9" y="675.5" width="4.2" height="5.4" stroke-width="0.7"/>
  <rect x="1135.3" y="674" width="8.8" height="7.8" rx="0.8"/><path d="M1137.2 674v4h5v-4M1139.7 674v2.2"/>
 </g>
 <g stroke="#5a5a5a" stroke-width="0.9" fill="none"><path d="M1157 679.2h4"/><path d="M1166 679.2h66"/><path d="M1236 679.2h4.4M1238.2 677v4.4"/><path d="M1199.6 677.4v3.6" stroke="#bdbdbd"/></g>
</svg>

<!-- dialog -->
<div id="dlg">
 <div class="tb"></div>
 <div class="tt">Es sind Fehler beim Aktualisieren aufgetreten</div>
 <svg class="abs" style="right:4.6px;top:4.6px" width="11" height="11" viewBox="0 0 11 11"><path d="M2 2l7 7M9 2l-7 7" stroke="#fff" stroke-width="0.8" fill="none"/></svg>
 <svg class="abs" style="left:13.6px;top:34px" width="23" height="23" viewBox="0 0 23 23"><defs><linearGradient id="qg" x1="0" y1="0" x2="1" y2="1"><stop offset="0" stop-color="#1a8ae0"/><stop offset="1" stop-color="#2f62d0"/></linearGradient></defs><circle cx="11.5" cy="11.5" r="10.8" fill="url(#qg)"/><text x="11.5" y="16.2" text-anchor="middle" font-family="Liberation Sans, sans-serif" font-size="13.5" fill="#fff">?</text></svg>
 <div class="msg">Fehler beim Aktualisieren der Bibliotheken und Boards<br>aufgetreten.<br>Leider treten beim herunter laden vom Arduino Server<br>manchmal Übertragungsfehler auf.<br>Oft hilft es wenn man den Prozess noch mal startet.<br><br>Nicht installiert:<br>&nbsp;&nbsp;&nbsp;FastLED<br><br>Soll die Aktualisierung noch mal aufgerufen werden?</div>
 <div class="foot"></div>
 <div class="btn" style="left:131.8px;width:52.6px;border-color:#2f7fd6;box-shadow:inset 0 0 0 .5px #2f7fd6">Ja</div>
 <div class="btn" style="left:190.6px;width:51.6px">Nein</div>
</div>
</body></html>
